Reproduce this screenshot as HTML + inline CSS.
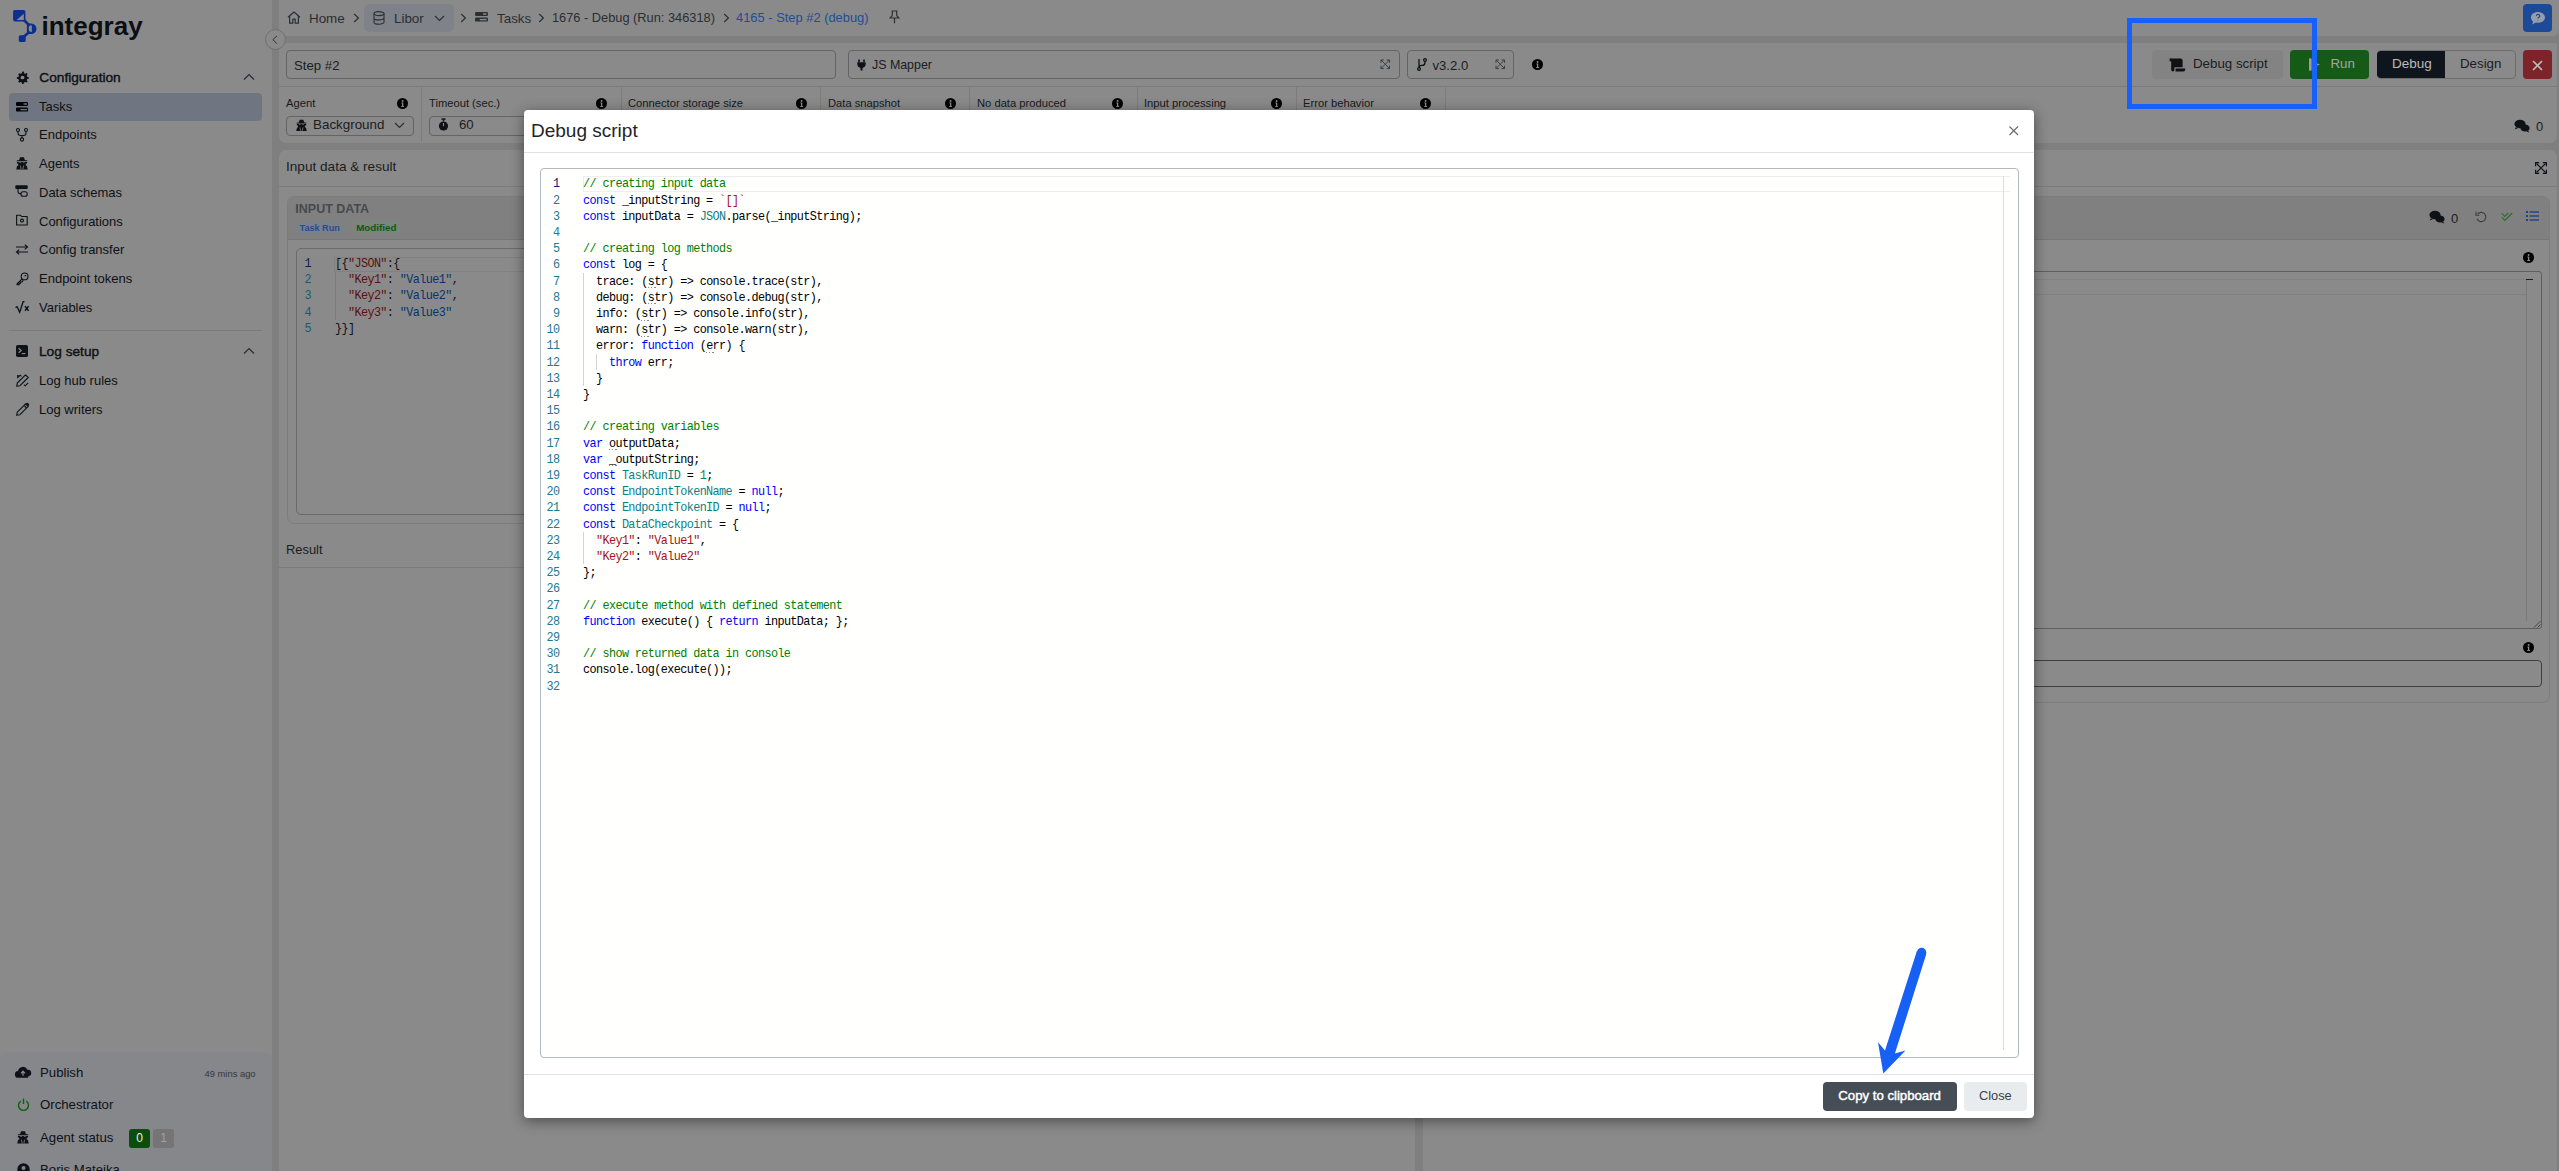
<!DOCTYPE html>
<html><head><meta charset="utf-8">
<style>
*{box-sizing:border-box;margin:0;padding:0}
html,body{width:2559px;height:1171px;overflow:hidden}
body{background:#7f7f7f;font-family:"Liberation Sans",sans-serif;color:#0e1115;position:relative}
.a{position:absolute}
.t{position:absolute;white-space:pre;line-height:1}
svg{position:absolute;overflow:visible}
/* sidebar */
#sb{left:0;top:0;width:272px;height:1171px;background:#8a8a8a}
.nav{font-size:13px;color:#0e1115}
.sec{font-size:13.7px;-webkit-text-stroke:0.4px #0e1115;color:#0e1115}
/* header */
#hdr{left:279px;top:0;width:2280px;height:36px;background:#8a8a8a;border-bottom-right-radius:6px}
.card{background:#8a8a8a;border-radius:7px}
.inp{position:absolute;border:1px solid #646464;border-radius:4px}
.lbl{font-size:11.2px;color:#16191d}
.info{position:absolute;width:11px;height:11px;border-radius:50%;background:#000}
.info:after{content:"";position:absolute;left:4.7px;top:4.6px;width:1.7px;height:4px;background:#8a8a8a;box-shadow:-0.8px 3.2px 0 0 #8a8a8a,0.8px 3.2px 0 0 #8a8a8a}
.info:before{content:"";position:absolute;left:4.7px;top:2.2px;width:1.7px;height:1.6px;border-radius:50%;background:#8a8a8a}
.sep{position:absolute;width:1px;background:#7d7d7d}
/* modal */
#modal{left:524px;top:110px;width:1510px;height:1008px;background:#fff;border-radius:4px;box-shadow:0 3px 14px rgba(0,0,0,.45)}
.code{font-family:"Liberation Mono",monospace;font-size:11.8px;letter-spacing:-0.6px;line-height:16.2px;white-space:pre}
.ln{position:absolute;left:0;width:559.5px;text-align:right;color:#237893}
u{text-decoration:none}
.sy{transform:scaleY(1.09);transform-origin:0 0}
.cm{color:#008000}.kw{color:#0000ff}.ty{color:#0b7f80}.st{color:#a31515}.nu{color:#098658}
</style></head><body>

<!-- SIDEBAR -->
<div id="sb" class="a">
  <!-- logo -->
  <svg style="left:0;top:0" width="40" height="45" viewBox="0 0 40 45">
    <rect x="13.1" y="10" width="12.3" height="11.4" rx="1.8" fill="#0b2f91"/>
    <path d="M16.6 20L23.8 13.8V20z" fill="#8a8a8a"/>
    <path d="M24 20l5 5.2M29 32.2l-5.2 4.6" stroke="#0b2f91" stroke-width="2.6"/>
    <path d="M28.2 23.4h3a5.3 5.3 0 0 1 0 10.6h-3z" fill="#0b2f91"/>
    <path d="M31.8 25.2v6.8a3.4 3.4 0 0 1 0-6.8z" fill="#8a8a8a"/>
    <path d="M26.9 23.4h1.8v10.6h-1.8z" fill="#0b2f91"/>
    <rect x="18.8" y="35.3" width="6.9" height="6.7" rx="1.5" fill="#0b2f91"/>
  </svg>
  <div class="t" style="left:41.5px;top:12.5px;font-size:26px;font-weight:bold;color:#0b0e13">integray</div>

  <!-- collapse circle -->
  <div class="a" style="left:264.8px;top:28.8px;width:21px;height:21px;border-radius:50%;border:1px solid #6f6f6f;background:#8a8a8a;z-index:3"></div>
  <svg style="left:272px;top:35px;z-index:4" width="8" height="10" viewBox="0 0 8 10"><path d="M5 0.8L0.9 4.6 5 8.8" fill="none" stroke="#2f3236" stroke-width="1"/></svg>

  <!-- Configuration -->
  <svg style="left:15.5px;top:70.5px" width="13" height="13" viewBox="0 0 16 16"><path d="M8 0.5l1.5 0.2 0.5 2 1.3 0.7 1.9-0.8 1 1.2-0.9 1.8 0.5 1.4 2 0.7v1.6l-2 0.6-0.5 1.4 0.9 1.9-1.1 1.1-1.9-0.9-1.3 0.6-0.6 2-1.6 0.1-0.6-2-1.3-0.6-1.9 0.9-1.1-1.1 0.9-1.9-0.6-1.4-2-0.6v-1.6l2-0.7 0.6-1.4-0.9-1.8 1.1-1.2 1.8 0.8 1.4-0.7 0.5-2z" fill="#0e1115"/><circle cx="8" cy="8" r="2.3" fill="#8a8a8a"/></svg>
  <div class="t sec" style="left:39.3px;top:70.5px">Configuration</div>
  <svg style="left:243px;top:73px" width="12" height="8" viewBox="0 0 12 8"><path d="M1 6.5L6 1.5l5 5" fill="none" stroke="#2a2d31" stroke-width="1.2"/></svg>

  <!-- Tasks active -->
  <div class="a" style="left:9px;top:93px;width:253px;height:27.5px;background:#6f7681;border-radius:4px"></div>
  <svg style="left:16px;top:101.5px" width="12" height="10" viewBox="0 0 12 10"><rect x="0" y="0" width="12" height="4" rx="1.2" fill="#000"/><rect x="0" y="5.6" width="12" height="4" rx="1.2" fill="#000"/><rect x="7.5" y="1.3" width="3.5" height="1.4" fill="#6f7681"/><rect x="4.5" y="6.9" width="6.5" height="1.4" fill="#6f7681"/></svg>
  <div class="t nav" style="left:39px;top:100px">Tasks</div>

  <!-- Endpoints -->
  <svg style="left:16px;top:128px" width="12" height="14" viewBox="0 0 12 14"><circle cx="2" cy="2" r="1.5" fill="none" stroke="#0e1115" stroke-width="1.1"/><circle cx="10" cy="2" r="1.5" fill="none" stroke="#0e1115" stroke-width="1.1"/><circle cx="6" cy="11.5" r="1.6" fill="none" stroke="#0e1115" stroke-width="1.1"/><path d="M2 3.5v1.5a2.5 2.5 0 0 0 2.5 2.5h3a2.5 2.5 0 0 0 2.5-2.5v-1.5M6 7.5v2.4" fill="none" stroke="#0e1115" stroke-width="1.1"/></svg>
  <div class="t nav" style="left:39px;top:128px">Endpoints</div>

  <!-- Agents -->
  <svg style="left:16px;top:156.5px" width="12" height="13" viewBox="0 0 12 13"><path d="M4 0.3h4l0.9 3h2.3v1h-10.4v-1h2.3z" fill="#0e1115"/><path d="M0.9 4.9h10.2v1.7h-1.2a3.9 3.9 0 0 1-7.8 0h-1.2z" fill="#0e1115"/><path d="M0.2 12.6l0.9-3.6 2.6-1.3 2.3 1.4 2.3-1.4 2.6 1.3 0.9 3.6z" fill="#0e1115"/><path d="M4.4 8.6l0.7 3.6M7.6 8.6l-0.7 3.6" stroke="#8a8a8a" stroke-width="0.75"/><path d="M3.3 5.4h1.8M6.9 5.4h1.8" stroke="#8a8a8a" stroke-width="0.7"/></svg>
  <div class="t nav" style="left:39px;top:156.8px">Agents</div>

  <!-- Data schemas -->
  <svg style="left:15px;top:185px" width="13" height="13" viewBox="0 0 13 13"><rect x="0.3" y="0.3" width="12.4" height="3.6" rx="1" fill="#0e1115"/><path d="M3 3.8v2.8a2 2 0 0 0 2 2h1" fill="none" stroke="#0e1115" stroke-width="1.1"/><rect x="6" y="6.8" width="6.2" height="4.4" rx="2" fill="none" stroke="#0e1115" stroke-width="1.1"/></svg>
  <div class="t nav" style="left:39px;top:185.6px">Data schemas</div>

  <!-- Configurations -->
  <svg style="left:16px;top:214px" width="12" height="12" viewBox="0 0 12 12"><path d="M0.6 1.2h3.8l1.2 1.3h5.6v8.5h-10.6z" fill="none" stroke="#0e1115" stroke-width="1.1" stroke-linejoin="round"/><circle cx="6" cy="6.6" r="1.5" fill="none" stroke="#0e1115" stroke-width="1.1"/></svg>
  <div class="t nav" style="left:39px;top:214.5px">Configurations</div>

  <!-- Config transfer -->
  <svg style="left:15px;top:244px" width="14" height="11" viewBox="0 0 14 11"><path d="M1 3h11.5M9.8 0.6l2.7 2.4-2.7 2.4M13 8h-11.5M4.2 5.6l-2.7 2.4 2.7 2.4" fill="none" stroke="#0e1115" stroke-width="1.1"/></svg>
  <div class="t nav" style="left:39px;top:243.3px">Config transfer</div>

  <!-- Endpoint tokens -->
  <svg style="left:15.5px;top:271.5px" width="13" height="13" viewBox="0 0 13 13"><circle cx="8.6" cy="4.4" r="3.4" fill="none" stroke="#0e1115" stroke-width="1.1"/><circle cx="9.3" cy="3.7" r="0.8" fill="#0e1115"/><path d="M6.3 6.7l-5.3 5.3v0.6h2.2v-1.3h1.3v-1.3h1.2l1.6-1.6" fill="none" stroke="#0e1115" stroke-width="1.1" stroke-linejoin="round"/></svg>
  <div class="t nav" style="left:39px;top:272.2px">Endpoint tokens</div>

  <!-- Variables -->
  <svg style="left:15px;top:300.5px" width="15" height="12" viewBox="0 0 15 12"><path d="M0.5 6.5l1.6-0.8 2.6 5.6 3.4-10.6h1.4" fill="none" stroke="#0e1115" stroke-width="1.3"/><path d="M10 5.2l3.6 4.6M13.6 5.2l-3.6 4.6" stroke="#0e1115" stroke-width="1.4"/></svg>
  <div class="t nav" style="left:39px;top:301px">Variables</div>

  <div class="a" style="left:9px;top:329.5px;width:253px;height:1px;background:#7b7b7b"></div>

  <!-- Log setup -->
  <svg style="left:16px;top:345px" width="12" height="12" viewBox="0 0 12 12"><rect x="0" y="0" width="12" height="12" rx="1.8" fill="#0e1115"/><path d="M2.6 3.2l2.6 2.3-2.6 2.3" fill="none" stroke="#8a8a8a" stroke-width="1.2"/><path d="M5.8 8.6h3.6" stroke="#8a8a8a" stroke-width="1.2"/></svg>
  <div class="t sec" style="left:39px;top:344.8px">Log setup</div>
  <svg style="left:243px;top:347px" width="12" height="8" viewBox="0 0 12 8"><path d="M1 6.5L6 1.5l5 5" fill="none" stroke="#2a2d31" stroke-width="1.2"/></svg>

  <!-- Log hub rules -->
  <svg style="left:15.5px;top:373.5px" width="13" height="13" viewBox="0 0 13 13"><path d="M9.5 0.8l2.7 2.7-8.2 8.2-3.3 0.6 0.6-3.3z" fill="none" stroke="#0e1115" stroke-width="1.1" stroke-linejoin="round"/><path d="M1.2 4.2l3-3 1.2 1.2M8 10.6l1.2 1.2 3-3" fill="none" stroke="#0e1115" stroke-width="1.1"/><circle cx="2" cy="2" r="1.1" fill="#0e1115"/></svg>
  <div class="t nav" style="left:39px;top:374px">Log hub rules</div>

  <!-- Log writers -->
  <svg style="left:15.5px;top:402.5px" width="13" height="13" viewBox="0 0 13 13"><path d="M9.6 0.8l2.6 2.6-8.3 8.3-3.2 0.6 0.6-3.2z" fill="none" stroke="#0e1115" stroke-width="1.1" stroke-linejoin="round"/><path d="M8 2.4l2.6 2.6" stroke="#0e1115" stroke-width="1.1"/><path d="M9.6 0.8l2.6 2.6 0.5-0.6a1.4 1.4 0 0 0 0-2l-0.5-0.5a1.4 1.4 0 0 0-2 0z" fill="#0e1115"/></svg>
  <div class="t nav" style="left:39px;top:403px">Log writers</div>

  <!-- bottom panel -->
  <div class="a" style="left:0;top:1052px;width:271.5px;height:130px;background:#86878b;border-radius:8px 8px 0 0"></div>
  <svg style="left:15px;top:1066px" width="16" height="12" viewBox="0 0 16 12"><path d="M3.6 11.8a3.4 3.4 0 0 1-0.5-6.8 4.9 4.9 0 0 1 9.3-1.3 3.2 3.2 0 0 1 1 6.6l-0.4 1.5z" fill="#0e1115"/><path d="M8 9.8v-4.4M6 7.2l2-2 2 2" fill="none" stroke="#86878b" stroke-width="1.3"/></svg>
  <div class="t nav" style="left:40px;top:1066px;font-size:13.2px">Publish</div>
  <div class="t" style="left:204.5px;top:1068.6px;font-size:9.4px;color:#35383d">49 mins ago</div>
  <svg style="left:16.5px;top:1098px" width="13" height="13" viewBox="0 0 13 13"><path d="M3.8 3.2a5 5 0 1 0 5.4 0" fill="none" stroke="#0f5f0f" stroke-width="1.4"/><path d="M6.5 0.6v5.4" stroke="#0f5f0f" stroke-width="1.4"/></svg>
  <div class="t nav" style="left:40px;top:1097.6px;font-size:13.2px">Orchestrator</div>
  <svg style="left:17px;top:1131px" width="12" height="13" viewBox="0 0 12 13"><path d="M4 0.3h4l0.9 3h2.3v1h-10.4v-1h2.3z" fill="#0e1115"/><path d="M0.9 4.9h10.2v1.7h-1.2a3.9 3.9 0 0 1-7.8 0h-1.2z" fill="#0e1115"/><path d="M0.2 12.6l0.9-3.6 2.6-1.3 2.3 1.4 2.3-1.4 2.6 1.3 0.9 3.6z" fill="#0e1115"/><path d="M4.4 8.6l0.7 3.6M7.6 8.6l-0.7 3.6" stroke="#8a8a8a" stroke-width="0.75"/><path d="M3.3 5.4h1.8M6.9 5.4h1.8" stroke="#8a8a8a" stroke-width="0.7"/></svg>
  <div class="t nav" style="left:40px;top:1130.6px;font-size:13.2px">Agent status</div>
  <div class="a" style="left:129px;top:1128.5px;width:21px;height:19.5px;background:#0b4d0b;border-radius:3px;color:#e8efe8;font-size:12px;text-align:center;line-height:19.5px">0</div>
  <div class="a" style="left:153px;top:1128.5px;width:21px;height:19.5px;background:#757575;border-radius:3px;color:#a0a0a0;font-size:12px;text-align:center;line-height:19.5px">1</div>
  <svg style="left:16.5px;top:1163px" width="13" height="13" viewBox="0 0 13 13"><circle cx="6.5" cy="6.5" r="6.2" fill="#0e1115"/><circle cx="6.5" cy="5" r="2" fill="#86878b"/></svg>
  <div class="t nav" style="left:40px;top:1163px;font-size:13.2px">Boris Mateika</div>
</div>

<!-- HEADER -->
<div id="hdr" class="a"></div>
<svg style="left:287px;top:10.5px" width="14" height="13" viewBox="0 0 14 13"><path d="M1 6.2L7 1l6 5.2M2.6 5v7.2h3.2v-4h2.4v4h3.2v-7.2" fill="none" stroke="#2c2f33" stroke-width="1.2" stroke-linejoin="round"/></svg>
<div class="t nav" style="left:309px;top:11.7px;color:#2a2e33;font-size:13.4px">Home</div>
<svg style="left:353px;top:12.5px" width="7" height="10" viewBox="0 0 7 10"><path d="M1.2 1l4.2 4-4.2 4" fill="none" stroke="#2c2f33" stroke-width="1.2"/></svg>
<div class="a" style="left:364px;top:4.3px;width:89.5px;height:27.3px;background:#7f8389;border-radius:5px"></div>
<svg style="left:373px;top:10.5px" width="12" height="14" viewBox="0 0 12 14"><ellipse cx="6" cy="2.6" rx="5" ry="2" fill="none" stroke="#2c2f33" stroke-width="1.1"/><path d="M1 2.6v8.6c0 1.1 2.2 2 5 2s5-0.9 5-2v-8.6M1 6.9c0 1.1 2.2 2 5 2s5-0.9 5-2" fill="none" stroke="#2c2f33" stroke-width="1.1"/></svg>
<div class="t nav" style="left:394px;top:11.7px;color:#2a2e33;font-size:13.4px">Libor</div>
<svg style="left:434px;top:14.5px" width="11" height="7" viewBox="0 0 11 7"><path d="M1 1l4.5 4.5L10 1" fill="none" stroke="#2c2f33" stroke-width="1.2"/></svg>
<svg style="left:459.5px;top:12.5px" width="7" height="10" viewBox="0 0 7 10"><path d="M1.2 1l4.2 4-4.2 4" fill="none" stroke="#2c2f33" stroke-width="1.2"/></svg>
<svg style="left:475px;top:12px" width="13" height="10" viewBox="0 0 13 10"><rect x="0" y="0" width="13" height="4" rx="1.2" fill="#2c2f33"/><rect x="0" y="5.6" width="13" height="4" rx="1.2" fill="#2c2f33"/><rect x="8" y="1.3" width="3.6" height="1.4" fill="#8a8a8a"/><rect x="4.8" y="6.9" width="6.8" height="1.4" fill="#8a8a8a"/></svg>
<div class="t nav" style="left:497px;top:11.7px;color:#2a2e33;font-size:13.4px">Tasks</div>
<svg style="left:538px;top:12.5px" width="7" height="10" viewBox="0 0 7 10"><path d="M1.2 1l4.2 4-4.2 4" fill="none" stroke="#2c2f33" stroke-width="1.2"/></svg>
<div class="t nav" style="left:552px;top:11.7px;color:#2a2e33;font-size:12.8px">1676 - Debug (Run: 346318)</div>
<svg style="left:722.5px;top:12.5px" width="7" height="10" viewBox="0 0 7 10"><path d="M1.2 1l4.2 4-4.2 4" fill="none" stroke="#2c2f33" stroke-width="1.2"/></svg>
<div class="t nav" style="left:736px;top:11.7px;color:#224c98;font-size:12.9px">4165 - Step #2 (debug)</div>
<svg style="left:889px;top:10px" width="11" height="14" viewBox="0 0 11 14"><path d="M2.5 1h6M3.5 1l-0.4 4.8-2.1 2.2h9l-2.1-2.2-0.4-4.8M5.5 8v5.2" fill="none" stroke="#2c2f33" stroke-width="1.2" stroke-linejoin="round"/></svg>
<div class="a" style="left:2523px;top:4.3px;width:29px;height:27.4px;background:#1d4a98;border-radius:4px"></div>
<svg style="left:2530px;top:10.5px" width="16" height="14" viewBox="0 0 16 14"><path d="M8 1c3.9 0 7 2.4 7 5.4s-3.1 5.4-7 5.4c-0.8 0-1.5-0.1-2.2-0.3l-3.6 2 0.9-2.9c-1.3-1-2.1-2.5-2.1-4.2 0-3 3.1-5.4 7-5.4z" fill="#979da8"/><path d="M6.4 5a1.7 1.6 0 1 1 2.4 1.4c-0.6 0.3-0.8 0.6-0.8 1.2M8 9v0.6" fill="none" stroke="#1d4a98" stroke-width="1.2"/></svg>

<!-- CARD 1: toolbar + settings -->
<div class="a card" style="left:279px;top:43px;width:2278px;height:99.5px;border-radius:0 0 7px 7px"></div>
<div class="inp" style="left:286px;top:50.3px;width:549.5px;height:28.6px"></div>
<div class="t nav" style="left:294px;top:58.5px;font-size:13.2px;color:#1a1d21">Step #2</div>
<div class="inp" style="left:847.5px;top:50.3px;width:552px;height:28.6px"></div>
<svg style="left:857px;top:58.5px" width="9" height="12" viewBox="0 0 9 12"><path d="M2 0.5v2.5M7 0.5v2.5" stroke="#0e1115" stroke-width="1.6"/><path d="M0.3 3.2h8.4v1.6a4.2 4.2 0 0 1-3.2 4.1v2.6h-2v-2.6a4.2 4.2 0 0 1-3.2-4.1z" fill="#0e1115"/></svg>
<div class="t nav" style="left:872px;top:58.5px;font-size:12.4px;color:#1a1d21">JS Mapper</div>
<svg style="left:1379.5px;top:59px" width="10.5" height="10.5" viewBox="0 0 11 11"><path d="M1 1l9 9M10 1l-9 9M1 4V1h3M7 1h3v3M10 7v3H7M4 10H1V7" fill="none" stroke="#3a3d41" stroke-width="1"/></svg>
<div class="inp" style="left:1407.4px;top:50.3px;width:107px;height:28.6px"></div>
<svg style="left:1417px;top:57.5px" width="10" height="13" viewBox="0 0 10 13"><circle cx="2" cy="11" r="1.4" fill="none" stroke="#0e1115" stroke-width="1.2"/><circle cx="8" cy="2" r="1.4" fill="none" stroke="#0e1115" stroke-width="1.2"/><path d="M2 1v8.6M8 3.4v1a3 3 0 0 1-3 3h-0.4a2.6 2.6 0 0 0-2.6 2.6" fill="none" stroke="#0e1115" stroke-width="1.3"/></svg>
<div class="t nav" style="left:1432.5px;top:58.5px;font-size:13.1px;color:#1a1d21">v3.2.0</div>
<svg style="left:1495px;top:59px" width="10.5" height="10.5" viewBox="0 0 11 11"><path d="M1 1l9 9M10 1l-9 9M1 4V1h3M7 1h3v3M10 7v3H7M4 10H1V7" fill="none" stroke="#3a3d41" stroke-width="1"/></svg>
<svg style="left:1531.5px;top:58.5px" width="11" height="11" viewBox="0 0 11 11"><circle cx="5.5" cy="5.5" r="5.5" fill="#000"/><circle cx="5.6" cy="3" r="0.95" fill="#8a8a8a"/><path d="M4.4 4.6h1.9v3.5h0.8v0.9h-2.9v-0.9h0.8v-2.6h-0.6z" fill="#8a8a8a"/></svg>

<div class="a" style="left:2152.3px;top:50.2px;width:130.3px;height:28.7px;background:#838383;border-radius:4px"></div>
<svg style="left:2168.5px;top:57.5px" width="17" height="14" viewBox="0 0 17 14"><path d="M2.2 0.6h9.4a2 2 0 0 1 2 2v6.6h-8.2v2.6a1.6 1.6 0 0 1-3.2 0v-9.2a2 2 0 0 0-2-2z" fill="#0e1115"/><path d="M6.6 10.4h9.6v1.4a1.8 1.8 0 0 1-1.8 1.8h-8.2a1.6 1.6 0 0 0 0.4-1.2z" fill="#0e1115"/><rect x="0.6" y="0.6" width="2" height="3" rx="1" fill="#0e1115"/></svg>
<div class="t nav" style="left:2193px;top:57px;font-size:13.3px;color:#1a1d21">Debug script</div>
<div class="a" style="left:2289.8px;top:50.2px;width:79px;height:28.7px;background:#165a17;border-radius:4px"></div>
<svg style="left:2309px;top:58px" width="12" height="13" viewBox="0 0 12 13"><rect x="0" y="0.3" width="2.6" height="12.5" rx="0.8" fill="#9c9c9c"/><path d="M3 3.8l8 2.7-8 2.7z" fill="#9c9c9c"/></svg>
<div class="t nav" style="left:2330.5px;top:57px;font-size:13.3px;color:#a5a5a5">Run</div>
<div class="a" style="left:2376.5px;top:50.2px;width:139.5px;height:28.7px;border:1px solid #6d6d6d;border-radius:4px"></div><div class="a" style="left:2376.8px;top:50.8px;width:68px;height:27.3px;background:#0f151d;border-radius:4px 0 0 4px"></div>
<div class="t nav" style="left:2392px;top:57px;font-size:13.5px;color:#bcbcbc">Debug</div>
<div class="t nav" style="left:2460px;top:57px;font-size:13.3px;color:#1a1d21">Design</div>
<div class="a" style="left:2523px;top:50.2px;width:29px;height:28.7px;background:#7e2329;border-radius:4px"></div>
<svg style="left:2532px;top:59.5px" width="11" height="11" viewBox="0 0 11 11"><path d="M1 1l9 9M10 1l-9 9" stroke="#bdbdbd" stroke-width="1.7"/></svg>

<div class="a" style="left:279px;top:86.3px;width:2278px;height:1px;background:#7b7b7b"></div>
<div class="sep" style="left:421px;top:87px;height:55px"></div>
<div class="sep" style="left:620.5px;top:87px;height:55px"></div>
<div class="sep" style="left:820px;top:87px;height:55px"></div>
<div class="sep" style="left:969px;top:87px;height:55px"></div>
<div class="sep" style="left:1136.5px;top:87px;height:55px"></div>
<div class="sep" style="left:1295.5px;top:87px;height:55px"></div>
<div class="sep" style="left:1444.5px;top:87px;height:55px"></div>

<div class="t lbl" style="left:286px;top:97.5px">Agent</div><svg style="left:397.0px;top:98.0px" width="11" height="11" viewBox="0 0 11 11"><circle cx="5.5" cy="5.5" r="5.5" fill="#000"/><circle cx="5.6" cy="3" r="0.95" fill="#8a8a8a"/><path d="M4.4 4.6h1.9v3.5h0.8v0.9h-2.9v-0.9h0.8v-2.6h-0.6z" fill="#8a8a8a"/></svg>
<div class="t lbl" style="left:429px;top:97.5px">Timeout (sec.)</div><svg style="left:596.0px;top:98.0px" width="11" height="11" viewBox="0 0 11 11"><circle cx="5.5" cy="5.5" r="5.5" fill="#000"/><circle cx="5.6" cy="3" r="0.95" fill="#8a8a8a"/><path d="M4.4 4.6h1.9v3.5h0.8v0.9h-2.9v-0.9h0.8v-2.6h-0.6z" fill="#8a8a8a"/></svg>
<div class="t lbl" style="left:628px;top:97.5px">Connector storage size</div><svg style="left:795.5px;top:98.0px" width="11" height="11" viewBox="0 0 11 11"><circle cx="5.5" cy="5.5" r="5.5" fill="#000"/><circle cx="5.6" cy="3" r="0.95" fill="#8a8a8a"/><path d="M4.4 4.6h1.9v3.5h0.8v0.9h-2.9v-0.9h0.8v-2.6h-0.6z" fill="#8a8a8a"/></svg>
<div class="t lbl" style="left:828px;top:97.5px">Data snapshot</div><svg style="left:944.5px;top:98.0px" width="11" height="11" viewBox="0 0 11 11"><circle cx="5.5" cy="5.5" r="5.5" fill="#000"/><circle cx="5.6" cy="3" r="0.95" fill="#8a8a8a"/><path d="M4.4 4.6h1.9v3.5h0.8v0.9h-2.9v-0.9h0.8v-2.6h-0.6z" fill="#8a8a8a"/></svg>
<div class="t lbl" style="left:977px;top:97.5px">No data produced</div><svg style="left:1111.5px;top:98.0px" width="11" height="11" viewBox="0 0 11 11"><circle cx="5.5" cy="5.5" r="5.5" fill="#000"/><circle cx="5.6" cy="3" r="0.95" fill="#8a8a8a"/><path d="M4.4 4.6h1.9v3.5h0.8v0.9h-2.9v-0.9h0.8v-2.6h-0.6z" fill="#8a8a8a"/></svg>
<div class="t lbl" style="left:1144px;top:97.5px">Input processing</div><svg style="left:1270.5px;top:98.0px" width="11" height="11" viewBox="0 0 11 11"><circle cx="5.5" cy="5.5" r="5.5" fill="#000"/><circle cx="5.6" cy="3" r="0.95" fill="#8a8a8a"/><path d="M4.4 4.6h1.9v3.5h0.8v0.9h-2.9v-0.9h0.8v-2.6h-0.6z" fill="#8a8a8a"/></svg>
<div class="t lbl" style="left:1303px;top:97.5px">Error behavior</div><svg style="left:1419.5px;top:98.0px" width="11" height="11" viewBox="0 0 11 11"><circle cx="5.5" cy="5.5" r="5.5" fill="#000"/><circle cx="5.6" cy="3" r="0.95" fill="#8a8a8a"/><path d="M4.4 4.6h1.9v3.5h0.8v0.9h-2.9v-0.9h0.8v-2.6h-0.6z" fill="#8a8a8a"/></svg>

<div class="inp" style="left:286px;top:115.6px;width:127.6px;height:20px"></div>
<svg style="left:296px;top:118.5px" width="11" height="13" viewBox="0 0 12 13"><path d="M4 0.3h4l0.9 3h2.3v1h-10.4v-1h2.3z" fill="#0e1115"/><path d="M0.9 4.9h10.2v1.7h-1.2a3.9 3.9 0 0 1-7.8 0h-1.2z" fill="#0e1115"/><path d="M0.2 12.6l0.9-3.6 2.6-1.3 2.3 1.4 2.3-1.4 2.6 1.3 0.9 3.6z" fill="#0e1115"/><path d="M4.4 8.6l0.7 3.6M7.6 8.6l-0.7 3.6" stroke="#86878b" stroke-width="0.75"/><path d="M3.3 5.4h1.8M6.9 5.4h1.8" stroke="#86878b" stroke-width="0.7"/></svg>
<div class="t nav" style="left:313px;top:118.2px;font-size:13.4px;color:#1a1d21">Background</div>
<svg style="left:394px;top:122px" width="11" height="7" viewBox="0 0 11 7"><path d="M1 1l4.5 4.5L10 1" fill="none" stroke="#2c2f33" stroke-width="1.2"/></svg>
<div class="inp" style="left:429px;top:115.6px;width:180px;height:20px"></div>
<svg style="left:438px;top:118px" width="11" height="13" viewBox="0 0 11 13"><rect x="3.5" y="0.3" width="4" height="1.5" fill="#0e1115"/><rect x="4.8" y="1.5" width="1.4" height="2" fill="#0e1115"/><circle cx="5.5" cy="8" r="4.6" fill="#0e1115"/><path d="M5.5 5v3" stroke="#8a8a8a" stroke-width="1.1"/></svg>
<div class="t nav" style="left:459px;top:118.2px;font-size:13.2px;color:#1a1d21">60</div>
<svg style="left:2513.5px;top:118.5px" width="16" height="14" viewBox="0 0 16 14"><ellipse cx="6" cy="5" rx="5.6" ry="4.2" fill="#0e1115"/><path d="M1.8 8.2l-1 2.4 3-1.4z" fill="#0e1115"/><ellipse cx="11" cy="9" rx="4.6" ry="3.6" fill="#0e1115"/><path d="M14.2 11.4l1 2.2-2.8-1.2z" fill="#0e1115"/></svg>
<div class="t nav" style="left:2536px;top:119.5px;font-size:13px;color:#1a1d21">0</div>

<!-- CARD 2 left -->
<div class="a card" style="left:279px;top:150px;width:1136px;height:1040px"></div>
<div class="t nav" style="left:286px;top:160.3px;font-size:13.6px;color:#1a1d21">Input data &amp; result</div>
<div class="a" style="left:279px;top:185.8px;width:1136px;height:1px;background:#7b7b7b"></div>
<div class="a" style="left:287.3px;top:196.4px;width:1120px;height:328px;border:1px solid #7d7d7d;border-radius:7px;overflow:hidden">
  <div class="a" style="left:0;top:0;width:1120px;height:42.5px;background:#808080;border-bottom:1px solid #767676"></div>
</div>
<div class="t" style="left:295.3px;top:203.3px;font-size:12.5px;font-weight:bold;color:#46494e">INPUT DATA</div>
<div class="a" style="left:295px;top:221px;width:49.3px;height:13.6px;background:#7c8087;border-radius:2px"></div>
<div class="t" style="left:299.5px;top:223.7px;font-size:9.1px;font-weight:bold;color:#234d94">Task Run</div>
<div class="a" style="left:352.5px;top:221px;width:47.8px;height:13.6px;background:#7d847d;border-radius:2px"></div>
<div class="t" style="left:356.2px;top:223.1px;font-size:9.8px;font-weight:bold;color:#0c5a0c">Modified</div>
<div class="a" style="left:296.4px;top:248.3px;width:1102px;height:267.2px;border:1px solid #6b6b6b;border-radius:5px"></div>
<div class="a" style="left:334px;top:256.5px;width:1060px;height:15.3px;border:1px solid #808080;border-right:none"></div>
<div class="a" style="left:335px;top:272px;width:1px;height:48px;background:#7c7c7c"></div>
<div class="a code" style="left:296px;top:255px;width:600px;color:#0e1115">
<div class="sy" style="position:absolute;left:0;top:0;width:15px;text-align:right;color:#0a1d5a">1</div><div class="sy" style="position:absolute;left:39px;top:0">[{<span style="color:#5c1010">"JSON"</span>:{</div>
<div class="sy" style="position:absolute;left:0;top:16.2px;width:15px;text-align:right;color:#1a5a6c">2</div><div class="sy" style="position:absolute;left:39px;top:16.2px">  <span style="color:#5c1010">"Key1"</span>: <span style="color:#08346b">"Value1"</span>,</div>
<div class="sy" style="position:absolute;left:0;top:32.4px;width:15px;text-align:right;color:#1a5a6c">3</div><div class="sy" style="position:absolute;left:39px;top:32.4px">  <span style="color:#5c1010">"Key2"</span>: <span style="color:#08346b">"Value2"</span>,</div>
<div class="sy" style="position:absolute;left:0;top:48.6px;width:15px;text-align:right;color:#1a5a6c">4</div><div class="sy" style="position:absolute;left:39px;top:48.6px">  <span style="color:#5c1010">"Key3"</span>: <span style="color:#08346b">"Value3"</span></div>
<div class="sy" style="position:absolute;left:0;top:64.8px;width:15px;text-align:right;color:#1a5a6c">5</div><div class="sy" style="position:absolute;left:39px;top:64.8px">}}]</div>
</div>
<div class="t nav" style="left:286px;top:544px;font-size:12.9px;color:#1a1d21">Result</div>
<div class="a" style="left:279px;top:567.2px;width:1136px;height:1px;background:#7b7b7b"></div>

<!-- CARD 2 right -->
<div class="a card" style="left:1423px;top:150px;width:1134px;height:1040px"></div>
<svg style="left:2535px;top:161.5px" width="12" height="12" viewBox="0 0 12 12"><path d="M1.5 1.5l9 9M10.5 1.5l-9 9" stroke="#0e1115" stroke-width="1.1"/><path d="M0.6 4.2V0.6h3.6M7.8 0.6h3.6v3.6M11.4 7.8v3.6H7.8M4.2 11.4H0.6V7.8" fill="none" stroke="#0e1115" stroke-width="1.2"/></svg>
<div class="a" style="left:1423px;top:185.8px;width:1134px;height:1px;background:#7b7b7b"></div>
<div class="a" style="left:1431px;top:195.8px;width:1119px;height:507.5px;border:1px solid #7d7d7d;border-radius:7px;overflow:hidden">
  <div class="a" style="left:0;top:0;width:1119px;height:43px;background:#808080;border-bottom:1px solid #767676"></div>
</div>
<svg style="left:2428.5px;top:210px" width="16" height="14" viewBox="0 0 16 14"><ellipse cx="6" cy="5" rx="5.6" ry="4.2" fill="#0e1115"/><path d="M1.8 8.2l-1 2.4 3-1.4z" fill="#0e1115"/><ellipse cx="11" cy="9" rx="4.6" ry="3.6" fill="#0e1115"/><path d="M14.2 11.4l1 2.2-2.8-1.2z" fill="#0e1115"/></svg>
<div class="t nav" style="left:2451px;top:211.5px;font-size:13px;color:#1a1d21">0</div>
<svg style="left:2475px;top:210.5px" width="12" height="12" viewBox="0 0 12 12"><path d="M2.6 3.2a4.6 4.6 0 1 1-0.6 4.6" fill="none" stroke="#3b3e42" stroke-width="1.1"/><path d="M1 0.8v3.4h3.4" fill="none" stroke="#3b3e42" stroke-width="1.1"/></svg>
<svg style="left:2501px;top:210.5px" width="12" height="11" viewBox="0 0 12 11"><path d="M0.8 6.4l3 3 7.4-7.4M0.8 2.4l3 3 3.6-3.6" fill="none" stroke="#2f6a2f" stroke-width="1.1"/></svg>
<svg style="left:2525.5px;top:211px" width="13" height="10" viewBox="0 0 13 10"><rect x="0" y="0" width="2" height="2" fill="#1d4384"/><rect x="0" y="4" width="2" height="2" fill="#1d4384"/><rect x="0" y="8" width="2" height="2" fill="#1d4384"/><rect x="3.5" y="0.3" width="9.5" height="1.4" fill="#1d4384"/><rect x="3.5" y="4.3" width="9.5" height="1.4" fill="#1d4384"/><rect x="3.5" y="8.3" width="9.5" height="1.4" fill="#1d4384"/></svg>
<svg style="left:2522.5px;top:251.5px" width="11" height="11" viewBox="0 0 11 11"><circle cx="5.5" cy="5.5" r="5.5" fill="#000"/><circle cx="5.6" cy="3" r="0.95" fill="#8a8a8a"/><path d="M4.4 4.6h1.9v3.5h0.8v0.9h-2.9v-0.9h0.8v-2.6h-0.6z" fill="#8a8a8a"/></svg>
<div class="a" style="left:1440px;top:270.6px;width:1101.5px;height:358px;border:1px solid #5e5e5e;border-radius:3px"></div>
<div class="a" style="left:1441px;top:279.2px;width:1085px;height:15.6px;border-top:1px solid #818181;border-bottom:1px solid #818181"></div>
<div class="a" style="left:2526px;top:279px;width:1px;height:342px;background:#7a7a7a"></div>
<div class="a" style="left:2526px;top:279px;width:7px;height:1.2px;background:#1a1d21"></div>
<svg style="left:2533px;top:620px" width="8" height="8" viewBox="0 0 8 8"><path d="M1 7.5L7.5 1M4.5 7.5L7.5 4.5" stroke="#3a3d41" stroke-width="0.9"/></svg>
<svg style="left:2522.5px;top:641.8px" width="11" height="11" viewBox="0 0 11 11"><circle cx="5.5" cy="5.5" r="5.5" fill="#000"/><circle cx="5.6" cy="3" r="0.95" fill="#8a8a8a"/><path d="M4.4 4.6h1.9v3.5h0.8v0.9h-2.9v-0.9h0.8v-2.6h-0.6z" fill="#8a8a8a"/></svg>
<div class="a" style="left:1440px;top:660.4px;width:1102.3px;height:26.6px;border:1px solid #3e3e3e;border-radius:4px"></div>
<div class="a" style="left:1415px;top:1118px;width:8px;height:60px;background:#7f7f7f"></div>

<!-- MODAL -->
<div id="modal" class="a"></div>
<div class="t" style="left:531px;top:121px;font-size:19px;color:#212529">Debug script</div>
<svg style="left:2009px;top:126px" width="9.5" height="9.5" viewBox="0 0 10 10"><path d="M0.5 0.5l9 9M9.5 0.5l-9 9" stroke="#6a6d70" stroke-width="1.2"/></svg>
<div class="a" style="left:524px;top:152px;width:1510px;height:1px;background:#dee2e6"></div>
<div class="a" style="left:539.5px;top:168.3px;width:1479px;height:889.5px;border:1px solid #b3b8be;border-radius:4px;background:#fffffe"></div>
<div class="a" style="left:583px;top:176.10px;width:1427px;height:15.60px;border:1px solid #eeeeee;border-right:none"></div>
<div class="a" style="left:2003px;top:176px;width:1px;height:873.5px;background:#dcdcdc"></div>
<div class="a" style="left:583.00px;top:272.50px;width:1px;height:113.40px;background:#d3d3d3"></div>
<div class="a" style="left:595.96px;top:353.50px;width:1px;height:16.20px;background:#d3d3d3"></div>
<div class="a" style="left:583.00px;top:531.70px;width:1px;height:32.40px;background:#d3d3d3"></div>
<div class="a code" style="left:0;top:0;width:2559px">
<div class="ln sy" style="top:175.30px;color:#0b216f">1</div>
<div class="a sy" style="left:583px;top:175.30px;color:#000"><span class="cm">// creating input data</span></div>
<div class="ln sy" style="top:191.50px;color:#237893">2</div>
<div class="a sy" style="left:583px;top:191.50px;color:#000"><span class="kw">const</span> _inputString = <span class="st">`[]`</span></div>
<div class="ln sy" style="top:207.70px;color:#237893">3</div>
<div class="a sy" style="left:583px;top:207.70px;color:#000"><span class="kw">const</span> inputData = <span class="ty">JSON</span>.parse(_inputString);</div>
<div class="ln sy" style="top:223.90px;color:#237893">4</div>
<div class="a sy" style="left:583px;top:223.90px;color:#000"></div>
<div class="ln sy" style="top:240.10px;color:#237893">5</div>
<div class="a sy" style="left:583px;top:240.10px;color:#000"><span class="cm">// creating log methods</span></div>
<div class="ln sy" style="top:256.30px;color:#237893">6</div>
<div class="a sy" style="left:583px;top:256.30px;color:#000"><span class="kw">const</span> log = {</div>
<div class="ln sy" style="top:272.50px;color:#237893">7</div>
<div class="a sy" style="left:583px;top:272.50px;color:#000">  trace: (<u>str</u>) =&gt; console.trace(str),</div>
<div class="ln sy" style="top:288.70px;color:#237893">8</div>
<div class="a sy" style="left:583px;top:288.70px;color:#000">  debug: (<u>str</u>) =&gt; console.debug(str),</div>
<div class="ln sy" style="top:304.90px;color:#237893">9</div>
<div class="a sy" style="left:583px;top:304.90px;color:#000">  info: (<u>str</u>) =&gt; console.info(str),</div>
<div class="ln sy" style="top:321.10px;color:#237893">10</div>
<div class="a sy" style="left:583px;top:321.10px;color:#000">  warn: (<u>str</u>) =&gt; console.warn(str),</div>
<div class="ln sy" style="top:337.30px;color:#237893">11</div>
<div class="a sy" style="left:583px;top:337.30px;color:#000">  error: <span class="kw">function</span> (<u>err</u>) {</div>
<div class="ln sy" style="top:353.50px;color:#237893">12</div>
<div class="a sy" style="left:583px;top:353.50px;color:#000">    <span class="kw">throw</span> err;</div>
<div class="ln sy" style="top:369.70px;color:#237893">13</div>
<div class="a sy" style="left:583px;top:369.70px;color:#000">  }</div>
<div class="ln sy" style="top:385.90px;color:#237893">14</div>
<div class="a sy" style="left:583px;top:385.90px;color:#000">}</div>
<div class="ln sy" style="top:402.10px;color:#237893">15</div>
<div class="a sy" style="left:583px;top:402.10px;color:#000"></div>
<div class="ln sy" style="top:418.30px;color:#237893">16</div>
<div class="a sy" style="left:583px;top:418.30px;color:#000"><span class="cm">// creating variables</span></div>
<div class="ln sy" style="top:434.50px;color:#237893">17</div>
<div class="a sy" style="left:583px;top:434.50px;color:#000"><span class="kw">var</span> <u>outputData</u>;</div>
<div class="ln sy" style="top:450.70px;color:#237893">18</div>
<div class="a sy" style="left:583px;top:450.70px;color:#000"><span class="kw">var</span> <u>_outputString</u>;</div>
<div class="ln sy" style="top:466.90px;color:#237893">19</div>
<div class="a sy" style="left:583px;top:466.90px;color:#000"><span class="kw">const</span> <span class="ty">TaskRunID</span> = <span class="nu">1</span>;</div>
<div class="ln sy" style="top:483.10px;color:#237893">20</div>
<div class="a sy" style="left:583px;top:483.10px;color:#000"><span class="kw">const</span> <span class="ty">EndpointTokenName</span> = <span class="kw">null</span>;</div>
<div class="ln sy" style="top:499.30px;color:#237893">21</div>
<div class="a sy" style="left:583px;top:499.30px;color:#000"><span class="kw">const</span> <span class="ty">EndpointTokenID</span> = <span class="kw">null</span>;</div>
<div class="ln sy" style="top:515.50px;color:#237893">22</div>
<div class="a sy" style="left:583px;top:515.50px;color:#000"><span class="kw">const</span> <span class="ty">DataCheckpoint</span> = {</div>
<div class="ln sy" style="top:531.70px;color:#237893">23</div>
<div class="a sy" style="left:583px;top:531.70px;color:#000">  <span class="st">"Key1"</span>: <span class="st">"Value1"</span>,</div>
<div class="ln sy" style="top:547.90px;color:#237893">24</div>
<div class="a sy" style="left:583px;top:547.90px;color:#000">  <span class="st">"Key2"</span>: <span class="st">"Value2"</span></div>
<div class="ln sy" style="top:564.10px;color:#237893">25</div>
<div class="a sy" style="left:583px;top:564.10px;color:#000">};</div>
<div class="ln sy" style="top:580.30px;color:#237893">26</div>
<div class="a sy" style="left:583px;top:580.30px;color:#000"></div>
<div class="ln sy" style="top:596.50px;color:#237893">27</div>
<div class="a sy" style="left:583px;top:596.50px;color:#000"><span class="cm">// execute method with defined statement</span></div>
<div class="ln sy" style="top:612.70px;color:#237893">28</div>
<div class="a sy" style="left:583px;top:612.70px;color:#000"><span class="kw">function</span> execute() { <span class="kw">return</span> inputData; };</div>
<div class="ln sy" style="top:628.90px;color:#237893">29</div>
<div class="a sy" style="left:583px;top:628.90px;color:#000"></div>
<div class="ln sy" style="top:645.10px;color:#237893">30</div>
<div class="a sy" style="left:583px;top:645.10px;color:#000"><span class="cm">// show returned data in console</span></div>
<div class="ln sy" style="top:661.30px;color:#237893">31</div>
<div class="a sy" style="left:583px;top:661.30px;color:#000">console.log(execute());</div>
<div class="ln sy" style="top:677.50px;color:#237893">32</div>
<div class="a sy" style="left:583px;top:677.50px;color:#000"></div>
</div>
<div class="a" style="left:647.80px;top:287.10px;width:9px;height:1.2px;background:repeating-linear-gradient(90deg,#8a8a8a 0 1.3px,transparent 1.3px 3.2px)"></div>
<div class="a" style="left:647.80px;top:303.30px;width:9px;height:1.2px;background:repeating-linear-gradient(90deg,#8a8a8a 0 1.3px,transparent 1.3px 3.2px)"></div>
<div class="a" style="left:641.32px;top:319.50px;width:9px;height:1.2px;background:repeating-linear-gradient(90deg,#8a8a8a 0 1.3px,transparent 1.3px 3.2px)"></div>
<div class="a" style="left:641.32px;top:335.70px;width:9px;height:1.2px;background:repeating-linear-gradient(90deg,#8a8a8a 0 1.3px,transparent 1.3px 3.2px)"></div>
<div class="a" style="left:706.12px;top:351.90px;width:9px;height:1.2px;background:repeating-linear-gradient(90deg,#8a8a8a 0 1.3px,transparent 1.3px 3.2px)"></div>
<div class="a" style="left:608.92px;top:449.10px;width:9px;height:1.2px;background:repeating-linear-gradient(90deg,#8a8a8a 0 1.3px,transparent 1.3px 3.2px)"></div>
<div class="a" style="left:608.92px;top:465.30px;width:9px;height:1.2px;background:repeating-linear-gradient(90deg,#8a8a8a 0 1.3px,transparent 1.3px 3.2px)"></div>
<div class="a" style="left:524px;top:1074px;width:1510px;height:1px;background:#dee2e6"></div>
<div class="a" style="left:1823px;top:1082.2px;width:133.8px;height:28.6px;background:#454e57;border-radius:4px"></div>
<div class="t" style="left:1838.3px;top:1089.2px;font-size:13.2px;-webkit-text-stroke:0.45px #fff;color:#fff">Copy to clipboard</div>
<div class="a" style="left:1964.2px;top:1082.2px;width:62.6px;height:28.6px;background:#e9ecef;border-radius:4px"></div>
<div class="t" style="left:1979px;top:1089.8px;font-size:12.8px;color:#3a4047">Close</div>
<div class="a" style="left:2127px;top:18px;width:190px;height:90.6px;border:5px solid #1660ff"></div>
<svg style="left:0;top:0" width="2559" height="1171" viewBox="0 0 2559 1171"><circle cx="1921.6" cy="952.5" r="4.7" fill="#1660f5"/><path d="M1916.9 951.1L1926.3 953.9 1894.9 1053.6 1905.5 1050.6 1883.3 1073.4 1878 1042.3 1885 1050.5z" fill="#1660f5"/></svg>
</body></html>
